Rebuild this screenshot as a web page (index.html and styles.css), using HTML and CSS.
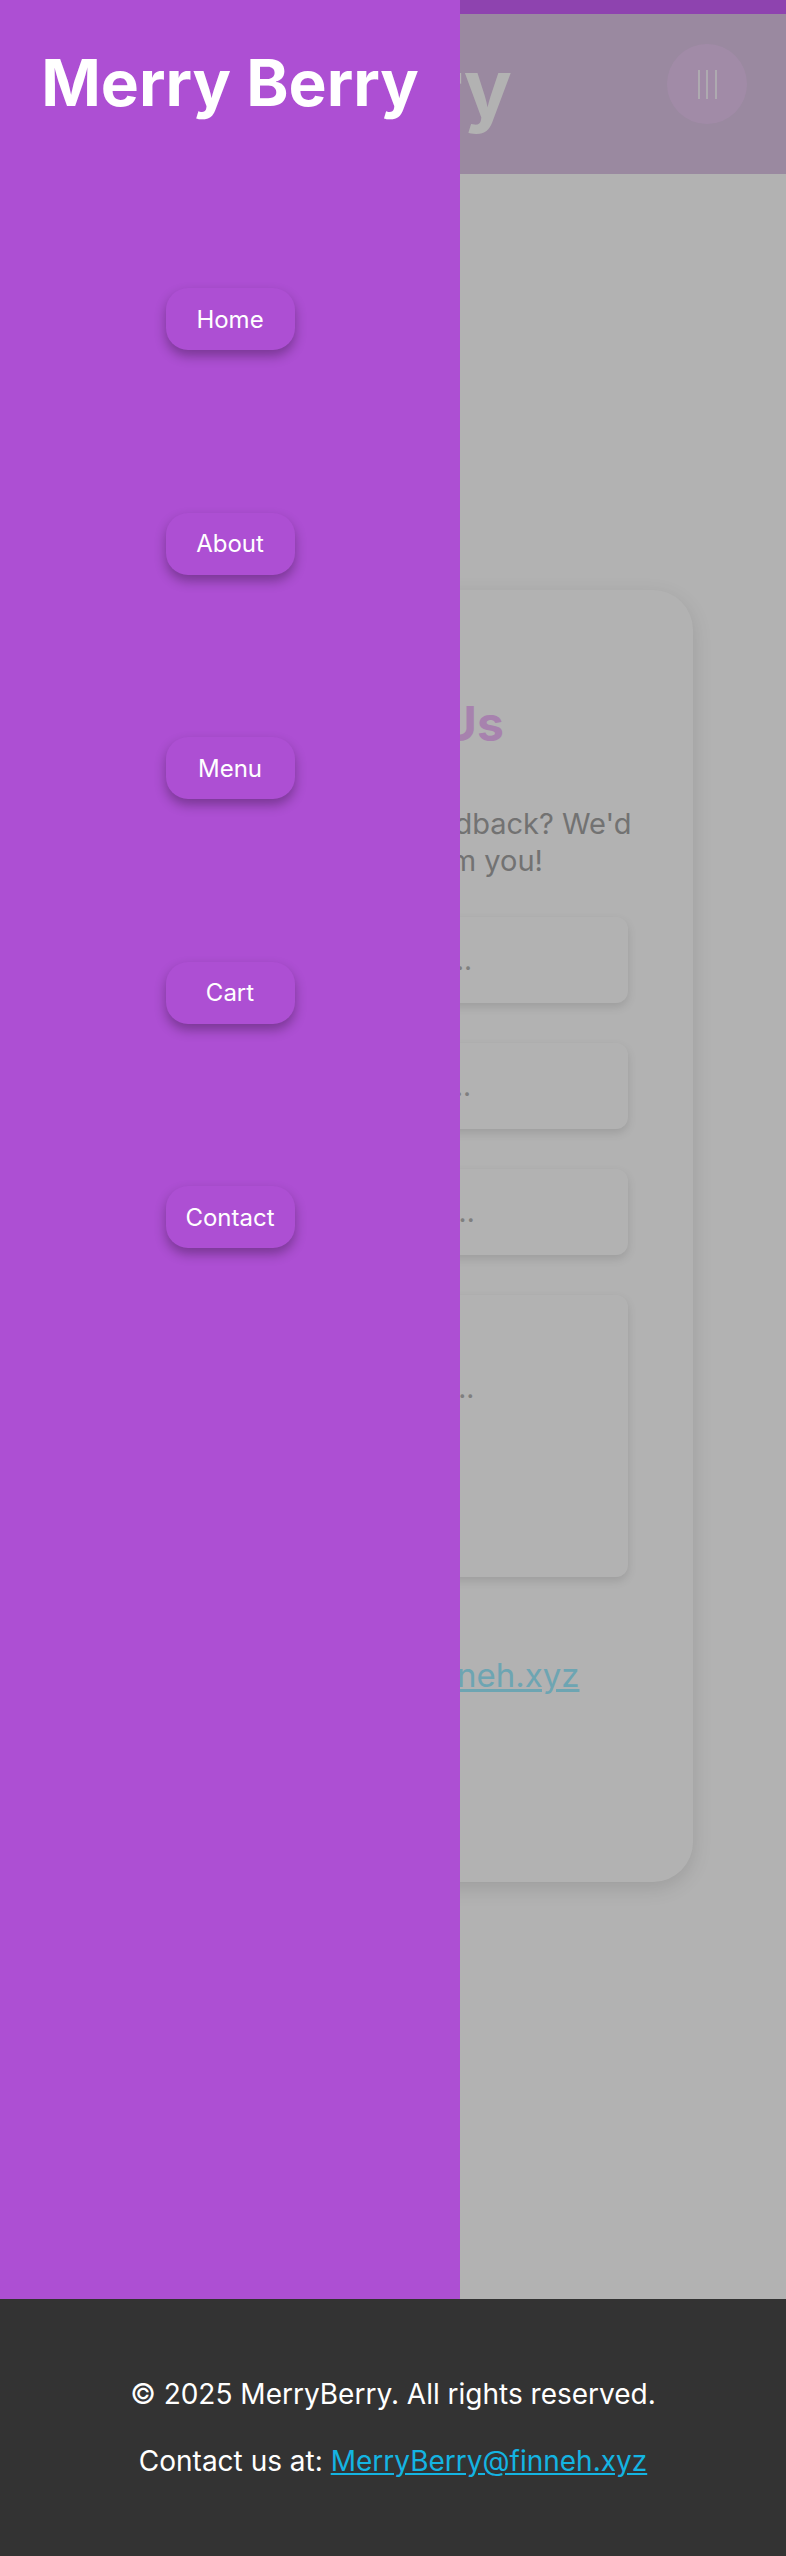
FILE: index.html
```html
<!DOCTYPE html>
<html lang="en">
<head>
<meta charset="utf-8">
<title>Merry Berry - Contact</title>
<link rel="stylesheet" href="styles.css">
</head>
<body>
<div class="page">
  <header class="site-header">
    <h1 class="brand">Merry Berry</h1>
    <button class="menu-toggle" type="button" aria-label="Menu"><span></span><span></span><span></span></button>
  </header>
  <main class="main">
    <section class="contact-card">
      <h2 class="contact-title">Contact Us</h2>
      <p class="contact-intro">Have questions or feedback? We'd love to hear from you!</p>
      <form class="contact-form">
        <input class="field" type="text" placeholder="Type your full name...">
        <input class="field" type="email" placeholder="Enter email address...">
        <input class="field" type="text" placeholder="Enter a subject here...">
        <textarea class="field field-message" placeholder="Write your message..."></textarea>
      </form>
      <p class="contact-email"><a href="#">MerryBerry@finneh.xyz</a></p>
    </section>
  </main>
  <div class="overlay"></div>
  <nav class="sidebar">
    <h2 class="sidebar-brand">Merry Berry</h2>
    <ul class="nav-list">
      <li><a class="nav-btn" href="#">Home</a></li>
      <li><a class="nav-btn" href="#">About</a></li>
      <li><a class="nav-btn" href="#">Menu</a></li>
      <li><a class="nav-btn" href="#">Cart</a></li>
      <li><a class="nav-btn" href="#">Contact</a></li>
    </ul>
  </nav>
</div>
<footer class="site-footer">
  <p>© 2025 MerryBerry. All rights reserved.</p>
  <p>Contact us at: <a href="#">MerryBerry@finneh.xyz</a></p>
</footer>
</body>
</html>
```

FILE: styles.css
```css
* { box-sizing: border-box; }

body {
  margin: 0;
  font-family: Inter, "Noto Sans", sans-serif;
  background: #fff;
  color: #a4a4a4;
}

.page { position: relative; }

.site-header {
  display: flex;
  align-items: center;
  justify-content: space-between;
  height: 174px;
  border-top: 14px solid #cc61fb;
  background: #ddc4e5;
  padding: 0 39px 16px 40px;
}

.brand {
  margin: 4px 0 0;
  font-size: 80px;
  font-weight: 700;
  line-height: 1;
  color: #fff;
  white-space: nowrap;
}

.menu-toggle {
  width: 80px;
  height: 80px;
  border-radius: 50%;
  border: none;
  padding: 0;
  margin-bottom: 4px;
  background: #e7c7f0;
  display: flex;
  align-items: center;
  justify-content: center;
  gap: 6.5px;
}

.menu-toggle span {
  width: 2px;
  height: 29px;
  background: rgba(255, 255, 255, 0.8);
}

.main { padding: 416px 0 417px; }

.contact-card {
  width: 600px;
  margin: 0 auto;
  background: #fff;
  border-radius: 40px;
  box-shadow: 0 6px 20px rgba(0, 0, 0, 0.12);
  padding: 103.5px 40px 187px;
}

.contact-title {
  margin: 0;
  padding-right: 38px;
  font-size: 48px;
  font-weight: 700;
  text-align: center;
  color: #efbafa;
}

.contact-intro {
  margin: 52px 0 0;
  font-size: 29px;
  line-height: 37px;
  text-align: center;
  color: #a4a4a4;
}

.contact-form {
  display: flex;
  flex-direction: column;
  gap: 40px;
  width: 470px;
  margin: 38px auto 0;
}

.field {
  display: block;
  width: 100%;
  height: 86px;
  border: none;
  border-radius: 12px;
  background: #fff;
  box-shadow: 0 4px 10px rgba(0, 0, 0, 0.12);
  font-family: Inter, "Noto Sans", sans-serif;
  font-size: 28px;
  padding: 0 20px 0 28px;
  color: #555;
  outline: none;
}

.field::placeholder { color: #b7b7b7; }

.field-message {
  height: 282px;
  padding-top: 76px;
  resize: none;
}

.contact-email {
  margin: 78.5px 0 0;
  text-align: center;
  font-size: 33px;
}

.contact-email a { color: #9decff; }

.overlay {
  position: absolute;
  inset: 0;
  background: rgba(0, 0, 0, 0.3);
}

.sidebar {
  position: absolute;
  top: 0;
  left: 0;
  bottom: 0;
  width: 460px;
  background: #ad4fd3;
  padding-top: 51px;
}

.sidebar-brand {
  margin: 0;
  font-size: 64px;
  font-weight: 700;
  line-height: 1;
  color: #fff;
  text-align: center;
  white-space: nowrap;
}

.nav-list {
  list-style: none;
  margin: 173px 0 0;
  padding: 0;
  display: flex;
  flex-direction: column;
  align-items: center;
  gap: 162.5px;
}

.nav-btn {
  display: flex;
  align-items: center;
  justify-content: center;
  width: 129px;
  height: 62px;
  border-radius: 22px;
  background: #ad4fd3;
  color: #fff;
  text-decoration: none;
  font-size: 24px;
  box-shadow: 0 6px 12px rgba(0, 0, 0, 0.3);
}

.site-footer {
  background: #333;
  color: #fff;
  text-align: center;
  padding: 76px 0;
  font-size: 28px;
  line-height: 1.4;
}

.site-footer p { margin: 0; }
.site-footer p + p { margin-top: 28px; }
.site-footer a { color: #14b4e2; }
```
